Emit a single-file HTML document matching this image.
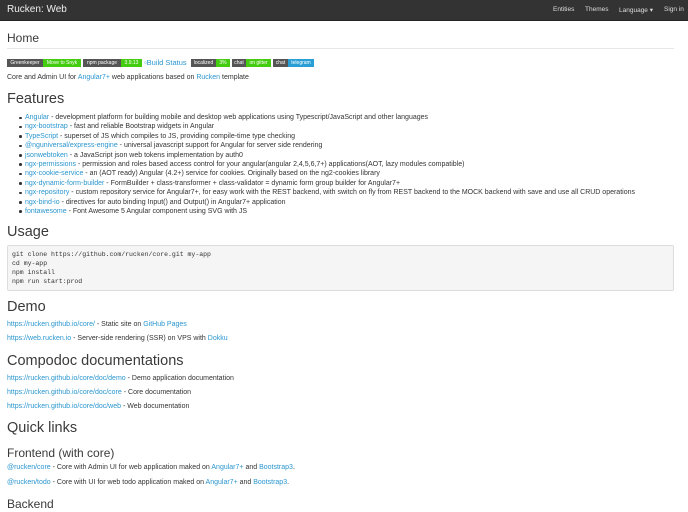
<html><head><style>
body{margin:0;width:688px;height:512px;overflow:hidden;background:#fff;font-family:"Liberation Sans",sans-serif;color:#333;position:relative}
.a{position:absolute;white-space:nowrap}
a{color:#2a96cf;text-decoration:none}
.nav{position:absolute;left:0;top:0;width:688px;height:20px;background:#333;border-bottom:1px solid #222}
.n{position:absolute;top:6px;font-size:6.5px;color:#ddd}
.t{font-size:7px;line-height:9px}
h{position:absolute;font-weight:normal;color:#3a3a3a;white-space:nowrap}
.b{position:absolute;top:59px;height:8px;font-size:5px;line-height:8px;color:#fff;text-align:center}
.d{background:#555}.g{background:#4c1}
.dot{display:inline-block;width:2.5px;height:2.5px;border-radius:50%;background:#333;position:absolute;left:19px;top:3.5px}
</style></head><body>
<div class="nav">
<div class="a" style="left:7px;top:4px;font-size:10px;color:#eee">Rucken: Web</div>
<div class="n" style="left:553px">Entities</div>
<div class="n" style="left:585px">Themes</div>
<div class="n" style="left:619px">Language ▾</div>
<div class="n" style="left:664px">Sign in</div>
</div>
<h style="left:7px;top:31px;font-size:12px">Home</h>
<div class="a" style="left:7px;top:48px;width:667px;border-top:1px solid #e8e8e8"></div>
<div class="b d" style="left:7px;width:36px">Greenkeeper</div><div class="b g" style="left:43px;width:38px">Move to Snyk</div>
<div class="b d" style="left:83px;width:38px">npm package</div><div class="b g" style="left:121px;width:21px">3.9.13</div>
<div class="a" style="left:144px;top:58px;font-size:7.5px;color:#2a96cf">▫Build Status</div>
<div class="b d" style="left:191px;width:25px">localized</div><div class="b g" style="left:216px;width:14px">3%</div>
<div class="b d" style="left:232px;width:14px">chat</div><div class="b g" style="left:246px;width:25px">on gitter</div>
<div class="b d" style="left:273px;width:15px">chat</div><div class="b" style="left:288px;width:26px;background:#2a9fd6">telegram</div>
<div class="a t" style="left:7px;top:73px">Core and Admin UI for <a>Angular7+</a> web applications based on <a>Rucken</a> template</div>
<h style="left:7px;top:91px;font-size:14.5px">Features</h>
<div class="a t" style="left:0;top:113px">
<div style="position:relative;padding-left:25px;height:9.4px"><i class="dot"></i><a>Angular</a> - development platform for building mobile and desktop web applications using Typescript/JavaScript and other languages</div>
<div style="position:relative;padding-left:25px;height:9.4px"><i class="dot"></i><a>ngx-bootstrap</a> - fast and reliable Bootstrap widgets in Angular</div>
<div style="position:relative;padding-left:25px;height:9.4px"><i class="dot"></i><a>TypeScript</a> - superset of JS which compiles to JS, providing compile-time type checking</div>
<div style="position:relative;padding-left:25px;height:9.4px"><i class="dot"></i><a>@nguniversal/express-engine</a> - universal javascript support for Angular for server side rendering</div>
<div style="position:relative;padding-left:25px;height:9.4px"><i class="dot"></i><a>jsonwebtoken</a> - a JavaScript json web tokens implementation by auth0</div>
<div style="position:relative;padding-left:25px;height:9.4px"><i class="dot"></i><a>ngx-permissions</a> - permission and roles based access control for your angular(angular 2,4,5,6,7+) applications(AOT, lazy modules compatible)</div>
<div style="position:relative;padding-left:25px;height:9.4px"><i class="dot"></i><a>ngx-cookie-service</a> - an (AOT ready) Angular (4.2+) service for cookies. Originally based on the ng2-cookies library</div>
<div style="position:relative;padding-left:25px;height:9.4px"><i class="dot"></i><a>ngx-dynamic-form-builder</a> - FormBuilder + class-transformer + class-validator = dynamic form group builder for Angular7+</div>
<div style="position:relative;padding-left:25px;height:9.4px"><i class="dot"></i><a>ngx-repository</a> - custom repository service for Angular7+, for easy work with the REST backend, with switch on fly from REST backend to the MOCK backend with save and use all CRUD operations</div>
<div style="position:relative;padding-left:25px;height:9.4px"><i class="dot"></i><a>ngx-bind-io</a> - directives for auto binding Input() and Output() in Angular7+ application</div>
<div style="position:relative;padding-left:25px;height:9.4px"><i class="dot"></i><a>fontawesome</a> - Font Awesome 5 Angular component using SVG with JS</div>
</div>
<h style="left:7px;top:224px;font-size:14.5px">Usage</h>
<div class="a" style="left:7px;top:245px;width:665px;height:44px;background:#f5f5f5;border:1px solid #ddd;border-radius:2px"></div>
<div class="a" style="left:12px;top:250px;font-family:'Liberation Mono',monospace;font-size:6.5px;line-height:9px;white-space:pre">git clone https://github.com/rucken/core.git my-app
cd my-app
npm install
npm run start:prod</div>
<h style="left:7px;top:299px;font-size:14.5px">Demo</h>
<div class="a t" style="left:7px;top:320px"><a>https://rucken.github.io/core/</a> - Static site on <a>GitHub Pages</a></div>
<div class="a t" style="left:7px;top:334px"><a>https://web.rucken.io</a> - Server-side rendering (SSR) on VPS with <a>Dokku</a></div>
<h style="left:7px;top:353px;font-size:14.5px">Compodoc documentations</h>
<div class="a t" style="left:7px;top:374px"><a>https://rucken.github.io/core/doc/demo</a> - Demo application documentation</div>
<div class="a t" style="left:7px;top:388px"><a>https://rucken.github.io/core/doc/core</a> - Core documentation</div>
<div class="a t" style="left:7px;top:402px"><a>https://rucken.github.io/core/doc/web</a> - Web documentation</div>
<h style="left:7px;top:420px;font-size:14.5px">Quick links</h>
<h style="left:7px;top:446px;font-size:12px">Frontend (with core)</h>
<div class="a t" style="left:7px;top:463px"><a>@rucken/core</a> - Core with Admin UI for web application maked on <a>Angular7+</a> and <a>Bootstrap3</a>.</div>
<div class="a t" style="left:7px;top:478px"><a>@rucken/todo</a> - Core with UI for web todo application maked on <a>Angular7+</a> and <a>Bootstrap3</a>.</div>
<h style="left:7px;top:497px;font-size:12px">Backend</h>
</body></html>
